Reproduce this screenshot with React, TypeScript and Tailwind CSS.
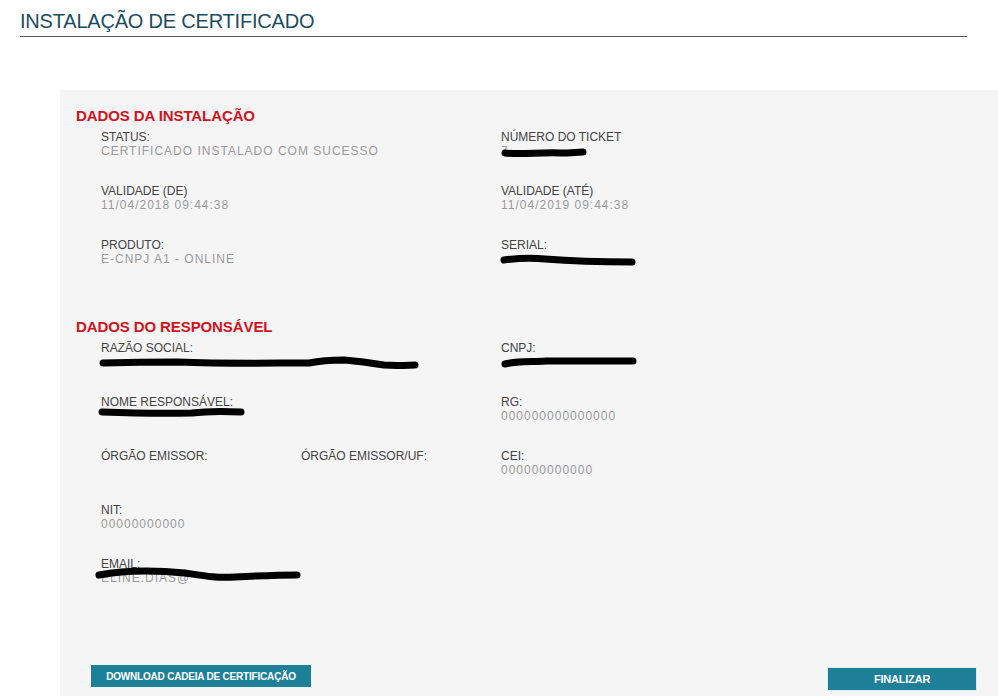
import React from 'react'

const FONT = { fontFamily: '"Liberation Sans", Arial, sans-serif' }

type Field = { label: string; value?: string; scribble?: { d: string; w: number; x?: number; y?: number } }

function Scribble({ d, w, x = 0, y = 0 }: { d: string; w: number; x?: number; y?: number }) {
  return (
    <svg className="absolute pointer-events-none" style={{ left: x, top: y }} width={w} height={16} viewBox={`0 0 ${w} 16`}>
      <path d={d} fill="none" stroke="#000" strokeWidth={7} strokeLinecap="round" strokeLinejoin="round" />
    </svg>
  )
}

function Cell({ f }: { f: Field | null }) {
  if (!f) return <div />
  return (
    <div className="h-[54px]">
      <div className="text-[12px] leading-[14px] text-[#444] whitespace-nowrap">{f.label}</div>
      <div className="relative text-[12px] leading-[14px] tracking-[1px] text-[#9a9a9a] h-[14px] whitespace-nowrap">
        {f.value}
        {f.scribble && <Scribble {...f.scribble} />}
      </div>
    </div>
  )
}

function Section({ title, rows }: { title: string; rows: (Field | null)[][] }) {
  return (
    <div>
      <h2 className="text-[15px] leading-[18px] font-bold text-[#d0141e] tracking-[-0.1px] ml-[16px]">{title}</h2>
      <div className="mt-[5px] ml-[41px]">
        {rows.map((r, i) => (
          <div key={i} className="grid grid-cols-[200px_200px_200px]">
            {r.map((f, j) => <Cell key={j} f={f} />)}
          </div>
        ))}
      </div>
    </div>
  )
}

export default function App() {
  const install: (Field | null)[][] = [
    [{ label: 'STATUS:', value: 'CERTIFICADO INSTALADO COM SUCESSO' }, null,
     { label: 'NÚMERO DO TICKET', value: '7', scribble: { w: 90, x: 0, y: 2, d: 'M4 7 C20 9 40 6 60 7 C70 7 76 6 82 6' } }],
    [{ label: 'VALIDADE (DE)', value: '11/04/2018 09:44:38' }, null,
     { label: 'VALIDADE (ATÉ)', value: '11/04/2019 09:44:38' }],
    [{ label: 'PRODUTO:', value: 'E-CNPJ A1 - ONLINE' }, null,
     { label: 'SERIAL:', value: '', scribble: { w: 140, x: -1, y: 0, d: 'M4 8 C20 6 35 6 45 7 C70 9 100 10 132 10' } }],
  ]
  const resp: (Field | null)[][] = [
    [{ label: 'RAZÃO SOCIAL:', value: '', scribble: { w: 330, x: -2, y: -1, d: 'M4 9 C40 8 60 8 78 8 C130 10 170 9 210 9 C225 6 235 6 245 6 C260 7 270 9 285 11 C300 12 310 11 316 11' } }, null,
     { label: 'CNPJ:', value: '', scribble: { w: 140, x: 0, y: -2, d: 'M4 11 C15 8 30 9 45 8 C80 8 110 8 132 8' } }],
    [{ label: 'NOME RESPONSÁVEL:', value: '', scribble: { w: 150, x: -4, y: -5, d: 'M5 8 C30 9 60 10 95 9 C110 7 125 7 144 8' } }, null,
     { label: 'RG:', value: '000000000000000' }],
    [{ label: 'ÓRGÃO EMISSOR:' }, { label: 'ÓRGÃO EMISSOR/UF:' }, { label: 'CEI:', value: '000000000000' }],
    [{ label: 'NIT:', value: '00000000000' }, null, null],
    [{ label: 'EMAIL:', value: 'ELINE.DIAS@', scribble: { w: 210, x: -6, y: -5, d: 'M4 9 C30 4 60 4 90 7 C110 10 120 12 140 11 C160 10 180 9 202 9' } }, null, null],
  ]

  return (
    <div className="w-[998px] h-[696px] overflow-hidden bg-white" style={FONT}>
      <div className="px-[20px] pt-[10px]">
        <h1 className="text-[20px] leading-[22px] text-[#1b4d62] tracking-[-0.2px] pb-[4px] border-b border-[#555] w-[947px]">INSTALAÇÃO DE CERTIFICADO</h1>
      </div>
      <div className="ml-[60px] mt-[53px] h-[620px] bg-[#f5f5f5] pt-[17px] flex flex-col">
        <Section title="DADOS DA INSTALAÇÃO" rows={install} />
        <div className="mt-[26px]">
          <Section title="DADOS DO RESPONSÁVEL" rows={resp} />
        </div>
        <div className="flex items-start justify-between mt-[54px] pl-[31px] pr-[21px]">
          <button className="w-[220px] h-[22px] bg-[#1e8098] text-white text-[10px] font-bold tracking-[-0.2px]">DOWNLOAD CADEIA DE CERTIFICAÇÃO</button>
          <button className="w-[150px] h-[24px] mt-[2px] bg-[#1e8098] text-white text-[11px] font-bold tracking-[-0.2px] border border-[#d8eef3]">FINALIZAR</button>
        </div>
      </div>
    </div>
  )
}
